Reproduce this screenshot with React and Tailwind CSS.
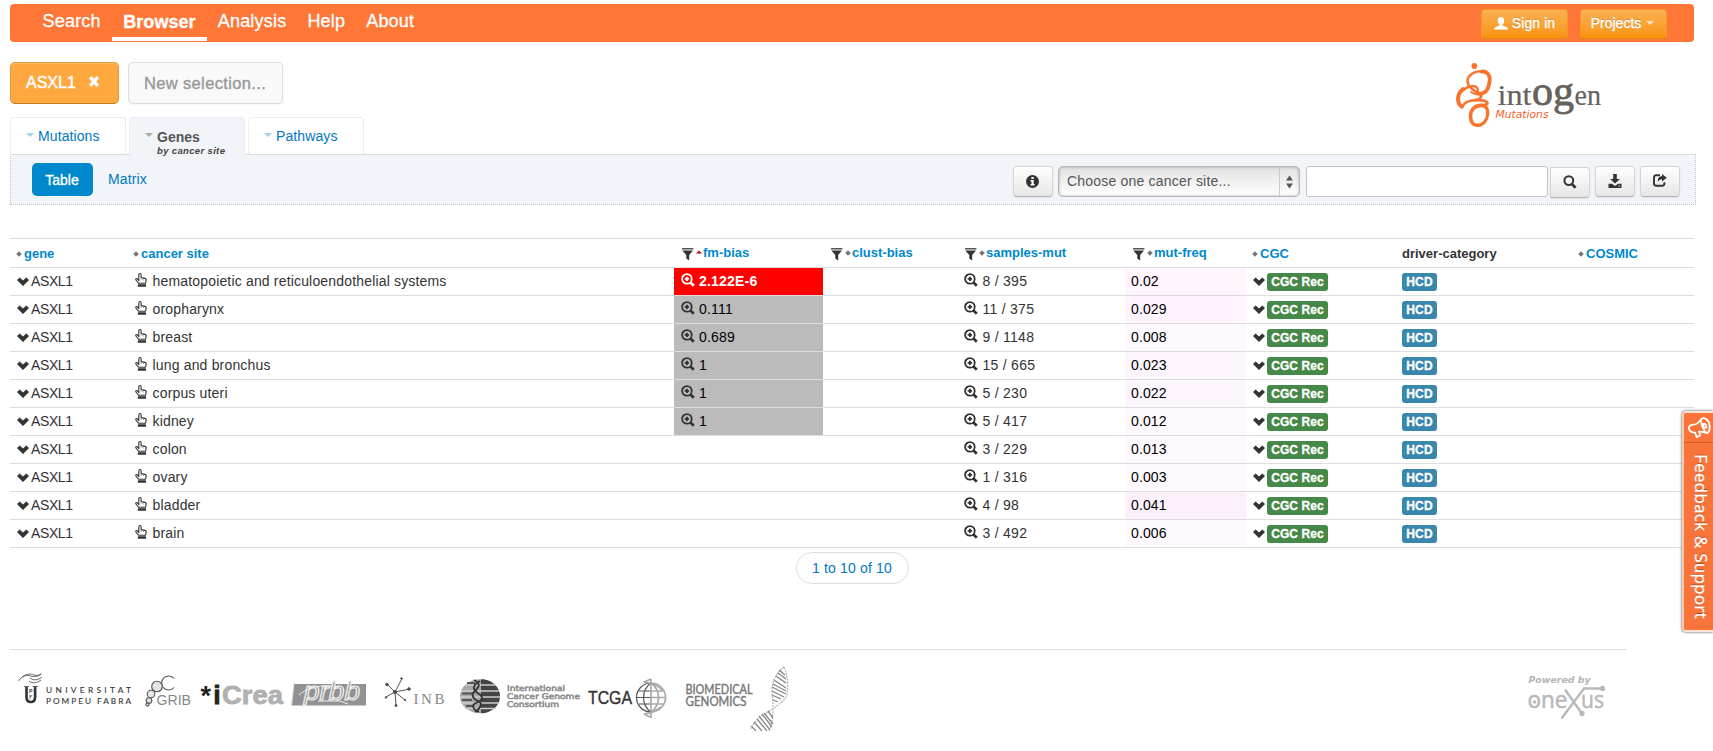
import React from "react";

const rows = [
  ["hematopoietic and reticuloendothelial systems", "2.122E-6", "8 / 395", "0.02", "bg-[#fef5ff]"],
  ["oropharynx", "0.111", "11 / 375", "0.029", "bg-[#fff3ff]"],
  ["breast", "0.689", "9 / 1148", "0.008", "bg-[#fef9ff]"],
  ["lung and bronchus", "1", "15 / 665", "0.023", "bg-[#fdf5fe]"],
  ["corpus uteri", "1", "5 / 230", "0.022", "bg-[#fdf5fe]"],
  ["kidney", "1", "5 / 417", "0.012", "bg-[#fdf7fe]"],
  ["colon", "", "3 / 229", "0.013", "bg-[#fdf7fe]"],
  ["ovary", "", "1 / 316", "0.003", "bg-[#fdf9fe]"],
  ["bladder", "", "4 / 98", "0.041", "bg-[#fcf0fd]"],
  ["brain", "", "3 / 492", "0.006", "bg-[#fdf9fe]"],
];

const Chevron = () => (
  <svg width="12" height="9" viewBox="0 0 12 9" className="shrink-0">
    <path d="M2.700 .4 6 3.500 9.300 .4 12 3.100 6 9 0 3.100Z" fill="#333" />
  </svg>
);

const Hand = () => (
  <svg width="12" height="14" viewBox="0 0 12 14" className="shrink-0">
    <path d="M3.800 8V1.700a1.100 1.100 0 0 1 2.300 0V4.600l3.900.8a1.300 1.300 0 0 1 1.200 1.500L10.600 10.200H3.500L.9 7C.4 6 1.600 5.100 2.400 5.900L3.800 7.400" fill="#fff" stroke="#333" strokeWidth="1.100" strokeLinejoin="round" />
    <path d="M6.200 5.500v1.600M8.300 5.900v1.400" stroke="#777" strokeWidth=".6" />
    <rect x="2.800" y="11.300" width="8.200" height="2.400" rx=".5" fill="#333" />
  </svg>
);

const ZoomIn = ({ color }) => (
  <svg width="14" height="14" viewBox="0 0 14 14" className="-mt-[2px] shrink-0" fill="none" stroke={color}>
    <circle cx="5.900" cy="5.900" r="4.800" strokeWidth="1.800" />
    <path d="M9.200 9.200 12.800 12.800" strokeWidth="2.700" />
    <path d="M5.900 3.700v4.400M3.700 5.900h4.400" strokeWidth="1.900" />
  </svg>
);

const Funnel = () => (
  <svg width="12" height="13" viewBox="0 0 12 13" className="shrink-0" fill="#333">
    <rect x="0" y="0" width="11.400" height="1.500" fill="#555" />
    <path d="M.3 2.400H11L7.200 7v5.600L4.300 10.600V7Z" />
  </svg>
);

const Sort = ({ asc }) =>
  asc ? (
    <svg width="6" height="6" viewBox="0 0 6 6" className="shrink-0"><path d="M0 3.400 3 .6 6 3.400Z" fill="#a11" /></svg>
  ) : (
    <svg width="6" height="6" viewBox="0 0 6 6" className="shrink-0"><path d="M3 .2 5.800 3 3 5.800 .2 3Z" fill="#777" /></svg>
  );

function Head({ label, filter, asc, plain, shift = "" }) {
  return (
    <th className="h-[29px] p-0 pl-[8px] text-left align-top">
      <div className={`flex items-center ${filter ? "pt-[4px]" : "pt-[5px]"} ${shift}`}>
        {filter && <span className="mr-[2px] mt-[2px] flex"><Funnel /></span>}
        {!plain && <span className={filter ? "mr-px" : "-ml-px mr-[2px]"}><Sort asc={asc} /></span>}
        <span className={plain ? "text-[#333]" : "text-[#0088cc]"}>{label}</span>
      </div>
    </th>
  );
}

function IconButton({ children, className = "" }) {
  return (
    <button className={`flex h-[31px] w-10 items-center justify-center rounded-[4px] border border-[#d4d4d4] border-b-[#b3b3b3] bg-linear-to-b from-white to-[#e6e6e6] shadow-[0_1px_2px_rgba(0,0,0,.08)] ${className}`}>
      {children}
    </button>
  );
}

function Tab({ label, children, active }) {
  return (
    <div className={`flex w-[116px] items-start rounded-t-[4px] border border-b-0 border-dotted pt-[8px] ${active ? "h-[39px] border-[#e3e8ec] bg-[#f1f5f9] pl-[15px]" : "h-[38px] border-[#ddd] pl-[15px]"}`}>
      <svg width="8" height="4" viewBox="0 0 8 4" className="mr-[4px] mt-[7px]">
        <path d="M0 0H8L4 4Z" fill={active ? "#aaa" : "#a3d3ec"} />
      </svg>
      {active ? (
        <div className="pt-px">
          <div className="text-[14px] font-bold leading-5 text-[#555]">{label}</div>
          <div className="-mt-[3px] whitespace-nowrap text-[9.5px] font-bold italic leading-[14px] tracking-[0.35px] text-[#444]">{children}</div>
        </div>
      ) : (
        <div className="text-[14px] leading-5 tracking-[0.1px] text-[#0077c0]">{label}</div>
      )}
    </div>
  );
}

const IntogenLogo = () => (
  <svg width="156" height="70" viewBox="1452 60 156 70">
    <circle cx="1474.300" cy="66" r="2.900" fill="#fb742f" />
    <g fill="none" stroke="#fb742f" strokeLinecap="round">
      <path d="M1481.500 71.600C1487.500 70.800 1490.500 76 1489.600 81.500 1488.600 88.500 1485.500 94 1480 93.600" strokeWidth="3.800" />
      <path d="M1481.500 71.400C1473.500 71 1468 75.500 1467.500 80.500 1467.300 85 1472.500 91.500 1480 93.500" strokeWidth="2.500" />
      <path d="M1477 93.500C1479 89 1477 85.800 1472.500 86 1466 86.500 1458.500 92.500 1457.300 99.500" strokeWidth="2.400" />
      <path d="M1463 89C1459 92 1457.600 96 1458.200 100.500 1458.600 103.500 1460 106 1462 106.500" strokeWidth="4" />
      <path d="M1462 106.800C1464.500 102.500 1469 100.600 1474 100.300 1480 100 1482.500 97 1480.500 94" strokeWidth="2.600" />
      <path d="M1471 92C1474 94 1477 95.500 1480.500 94" strokeWidth="2" />
      <path d="M1475 100.300C1482 99.500 1487 101 1487.300 103 1487.300 105 1484 105.500 1480 105.400" strokeWidth="3" />
      <path d="M1481.500 105.400C1474 105.500 1470.500 110.500 1470.500 116.500 1470.500 122 1473.500 125.500 1477.500 125.300" strokeWidth="3.600" />
      <path d="M1481.500 105.400C1486 106 1488 109.500 1487.700 114 1487.200 120.500 1483 125.500 1477.500 125.300" strokeWidth="3.200" />
    </g>
    <g fill="#66635c" stroke="#66635c" fontFamily="'Liberation Serif', serif">
      <text x="1497.500" y="105.300" fontSize="30" strokeWidth=".2" textLength="34" lengthAdjust="spacingAndGlyphs">int</text>
      <text x="1532" y="105.300" fontSize="41" strokeWidth=".8" textLength="42" lengthAdjust="spacingAndGlyphs">og</text>
      <text x="1574.500" y="105.300" fontSize="30" strokeWidth=".2" textLength="26.500" lengthAdjust="spacingAndGlyphs">en</text>
    </g>
    <text x="1495.500" y="118" fontSize="11" fontStyle="italic" fontFamily="'DejaVu Sans', sans-serif" fill="#f4622b" textLength="53" lengthAdjust="spacingAndGlyphs">Mutations</text>
  </svg>
);

const FooterLogos = () => (
  <div className="flex">
    <svg width="122" height="75" viewBox="18 660 122 75">
      <g fill="none" stroke="#555" strokeWidth=".9">
        <path d="M18.500 681c4-6 9-6 12-5s7 1 11-2M22 677c5-4 9-3 12-2s5 0 7-1M29 681c4 3 8 2 12-1M30 678c4 3 8 2 12-1" />
        <path d="M24 686.500h5M32.500 686.500h5.500" />
      </g>
      <path d="M26.500 687v10q0 5 4.300 5t4.300-5v-10" fill="none" stroke="#333" strokeWidth="2.600" />
      <g fontFamily="Lato, sans-serif" fill="#333">
        <text x="29" y="692.500" fontSize="5.500" fontWeight="700">P</text>
        <text x="29.200" y="698.500" fontSize="5" fontWeight="700">F</text>
        <text x="46" y="692.500" fontSize="8.300" stroke="#333" strokeWidth=".1" textLength="85">UNIVERSITAT</text>
        <text x="46" y="703.500" fontSize="8.300" stroke="#333" strokeWidth=".1" textLength="85">POMPEU FABRA</text>
      </g>
    </svg>
    <svg width="58" height="75" viewBox="140 660 58 75">
      <g fill="#e4e4e4" stroke="#555" strokeWidth="1.100">
        <path d="M174 678.500a7 7 0 1 0 0 9" fill="none" />
        <circle cx="157" cy="686.500" r="5.300" /><circle cx="151" cy="694" r="3.800" />
        <circle cx="149" cy="700.500" r="2.800" /><circle cx="147.500" cy="704.500" r="1.600" />
      </g>
      <text x="156.500" y="705.300" fontSize="14.500" fontFamily="'Liberation Sans', sans-serif" fill="#888" textLength="34.500" lengthAdjust="spacingAndGlyphs">GRIB</text>
    </svg>
    <svg width="90" height="75" viewBox="198 660 90 75">
      <g fontFamily="'Liberation Sans', sans-serif" fontWeight="700" fontSize="25">
        <text x="200.500" y="705" fontSize="27" fill="#222">*</text>
        <text x="213.500" y="703.500" fill="#222" stroke="#222">i</text>
        <text x="222" y="703.500" fill="#b0b0b0" stroke="#b0b0b0" strokeWidth=".8" textLength="61" lengthAdjust="spacingAndGlyphs">Crea</text>
      </g>
    </svg>
    <svg width="92" height="75" viewBox="288 660 92 75">
      <path d="M294 684H366V705.500H291.500Z" fill="#929292" />
      <path d="M294 683 291.500 706" stroke="#ddd" />
      <text x="304" y="700" fontSize="25" fontStyle="italic" fontFamily="'Liberation Sans', sans-serif" fill="#929292" stroke="#f5f5f5" strokeWidth="1.100" textLength="56" lengthAdjust="spacingAndGlyphs">prbb</text>
      <path d="M299 695c7-6 16-10 33-9M318 701h22l8 3" fill="none" stroke="#eee" />
    </svg>
    <svg width="76" height="75" viewBox="380 660 76 75">
      <g stroke="#555" strokeWidth="1" fill="#444">
        <path d="M395 692 387 684M395 692 402 678.500M395 692 410 689M395 692 386 697M395 692 396 706M395 692 405 700" />
        <circle cx="395" cy="692" r="1.600" /><circle cx="387" cy="684.500" r="1.300" /><circle cx="401.500" cy="678.500" r=".8" />
        <circle cx="409" cy="689" r="1.300" /><circle cx="386" cy="697.500" r=".8" /><circle cx="396" cy="705.500" r="1" /><circle cx="405" cy="700" r=".8" />
      </g>
      <text x="413.500" y="704.300" fontSize="15" fontFamily="'Liberation Serif', serif" fill="#888" textLength="31">INB</text>
    </svg>
    <svg width="128" height="75" viewBox="456 660 128 75">
      <ellipse cx="480" cy="696.300" rx="20" ry="17" fill="#a8a8a8" />
      <path d="M481 679.300a19 17 0 0 1 0 34Z" fill="#444" />
      <path d="M461 691h38.500M460 697h40M461.500 703h38M465 708.500h31M465 685h31" stroke="#ccc" strokeWidth="1.500" />
      <path d="M467 683h8M462 693.500h10M462 700h10M466 706h8" stroke="#555" strokeWidth="2" />
      <path d="M474 680c9 4 3 9 0 12s-1 7 4 9 3 7-3 11M480 681c-9 5-7 9-1 13s2 7-3 9-3 7 3 9" fill="none" stroke="#333" strokeWidth="1.800" />
      <g fontFamily="'DejaVu Sans', sans-serif" fontSize="7.800" fill="#888" stroke="#888" strokeWidth=".5">
        <text x="507" y="691.300" textLength="58" lengthAdjust="spacingAndGlyphs">International</text>
        <text x="507" y="699.300" textLength="73" lengthAdjust="spacingAndGlyphs">Cancer Genome</text>
        <text x="507" y="707.300" textLength="52" lengthAdjust="spacingAndGlyphs">Consortium</text>
      </g>
    </svg>
    <svg width="98" height="75" viewBox="584 660 98 75">
      <text x="588" y="704" fontSize="18.500" fontFamily="'Liberation Sans', sans-serif" fill="#333" stroke="#333" strokeWidth=".4" textLength="44" lengthAdjust="spacingAndGlyphs">TCGA</text>
      <g fill="none">
        <path d="M651 683a14.500 14.500 0 0 0 0 29M651 683c-10 7-10 22 0 29M637 697.500h14M639 691h12M639 704h12" stroke="#555" strokeWidth="1.200" />
        <path d="M651 683a14.500 14.500 0 0 1 0 29M651 679v39M651 683c10 7 10 22 0 29M651 697.500h14M651 691h12M651 704h12M644 682l7-3M644 714l7 3.500M644 682c9 1 14 4 18 8M644 714c9-1 13-4 17-7" stroke="#aaa" strokeWidth="1.700" />
      </g>
    </svg>
    <svg width="116" height="75" viewBox="682 660 116 75">
      <g fontFamily="Lato, sans-serif" fontSize="12.500" fill="#777" stroke="#777" strokeWidth=".4">
        <text x="685.500" y="694" textLength="67" lengthAdjust="spacingAndGlyphs">BIOMEDICAL</text>
        <text x="685.500" y="706.300" textLength="61" lengthAdjust="spacingAndGlyphs">GENOMICS</text>
      </g>
      <g fill="none" stroke="#aaa" strokeWidth="1.100">
        <path d="M784 667c-13 10-13 22-11 36 0 10 0 19-4 28M784 667c4 9 4 19 3 27-1 6-8 10-14 15-9 5-18 10-22 20" strokeDasharray="2 1" />
        <path d="M779 670l6 5M778 673l8 6M776 676l10 7M774 680l12 8M773 684l13 7M772 687l14 7M772 691l12 6M772 695l9 4M773 700l5 2M768 711l5 7M764 713l9 11M762 714l10 13M759 716l11 14M757 719l10 12M754 722l8 9M751 726l5 5" stroke="#888" strokeWidth="1.300" />
      </g>
    </svg>
  </div>
);

const Onexus = () => (
  <svg width="80" height="75" viewBox="1526 660 80 75">
    <text x="1528.500" y="682.500" fontSize="9.500" fontWeight="700" fontStyle="italic" fontFamily="'DejaVu Sans', sans-serif" fill="#b5b5b5" textLength="62" lengthAdjust="spacingAndGlyphs">Powered by</text>
    <g fontFamily="'Open Sans', sans-serif" fontSize="24" fill="#b8b8b8" stroke="#b8b8b8" strokeWidth=".5">
      <text x="1527.500" y="708" textLength="40" lengthAdjust="spacingAndGlyphs">one</text>
      <text x="1581" y="708" textLength="23" lengthAdjust="spacingAndGlyphs">us</text>
    </g>
    <g stroke="#b8b8b8" fill="none" strokeWidth="2.300">
      <path d="M1561.500 718.500 1584 688.500H1602M1565 689.500 1581.500 713" />
      <circle cx="1602.500" cy="688.500" r="1.500" fill="#b8b8b8" /><circle cx="1582" cy="713.500" r="1.500" fill="#b8b8b8" />
      <circle cx="1534.500" cy="702" r="1" strokeWidth="1.500" />
    </g>
  </svg>
);

export default function App() {
  const menu = ["Search", "Browser", "Analysis", "Help", "About"];
  return (
    <div className="relative h-[751px] w-[1713px] overflow-hidden bg-white pl-[10px] pt-1 font-['Liberation_Sans',Arial,sans-serif] text-[14px] leading-5 text-[#333]">
      <nav className="flex h-[38px] w-[1684px] items-start rounded-[4px] bg-[#ff7736] pl-[22px] text-[18px] text-white">
        {menu.map((m) =>
          m === "Browser" ? (
            <a key={m} className="ml-px h-[37px] w-[95px] border-b-4 border-white pl-[11px] pt-[8px] font-bold tracking-[0.05px] [-webkit-text-stroke:.3px_white]">{m}</a>
          ) : (
            <a key={m} className="px-[10.5px] pt-[7px] tracking-[0.2px] [-webkit-text-stroke:.3px_white] [text-shadow:0_-1px_0_rgba(0,0,0,.12)]">{m}</a>
          )
        )}
        <div className="ml-auto mr-[27px] mt-[5px] flex gap-3 text-[14px]">
          <button className="flex h-[30px] w-[87px] items-center justify-center gap-[4px] rounded-[4px] border border-[#f5992b] border-b-[#d98a1c] bg-linear-to-b from-[#fbb04f] to-[#f89406] pb-[2px] [text-shadow:0_-1px_0_rgba(0,0,0,.25)]">
            <svg width="14" height="13" viewBox="0 0 14 13"><path d="M7 0c2.300 0 3.200 1.500 3.200 3.500S9.300 7 8.600 7.500v1L13 10.500q1 .6 1 2H0q0-1.400 1-2l4.400-2v-1C4.700 7 3.800 5.500 3.800 3.500S4.700 0 7 0Z" fill="#fff" /></svg>
            <span className="tracking-[0.1px] [-webkit-text-stroke:.3px_white]">Sign in</span>
          </button>
          <button className="flex h-[30px] w-[87px] items-center justify-center gap-[5px] rounded-[4px] border border-[#f5992b] border-b-[#d98a1c] bg-linear-to-b from-[#fbb04f] to-[#f89406] pb-[2px] pr-[2px] [text-shadow:0_-1px_0_rgba(0,0,0,.25)]">
            <span className="[-webkit-text-stroke:.3px_white]">Projects</span>
            <svg width="8" height="4" viewBox="0 0 8 4"><path d="M0 0H8L4 4Z" fill="#fde3bd" /></svg>
          </button>
        </div>
      </nav>

      <header className="flex h-[75px] items-start">
        <div className="flex gap-[9px] pt-[20px]">
          <button className="flex h-[42px] w-[109px] items-center rounded-[5px] border border-[#dd963c] border-b-[#c27c25] bg-[#ffa83f] pl-[15px] text-[16px] text-white shadow-[inset_0_1px_0_#ffbc63] [-webkit-text-stroke:.4px_white]">
            ASXL1
            <svg width="12" height="11" viewBox="0 0 12 11" className="-mt-[3px] ml-[12px]"><path d="M2.200 1.200 9.800 9.800M9.800 1.200 2.200 9.800" stroke="#fff" strokeWidth="3.400" /></svg>
          </button>
          <button className="h-[42px] w-[155px] rounded-[5px] border border-[#ddd] bg-[#f9f9f9] pl-[15px] text-left text-[16.5px] tracking-[0.35px] text-[#999] shadow-[0_1px_2px_rgba(0,0,0,.05)] [-webkit-text-stroke:.4px_#999]">New selection...</button>
        </div>
        <div className="ml-auto mr-[105px] pt-[18px]"><IntogenLogo /></div>
      </header>

      <div className="flex h-[38px] gap-[3px] pr-4">
        <Tab label="Mutations" />
        <Tab label="Genes" active>by cancer site</Tab>
        <Tab label="Pathways" />
      </div>
      <section className="-mt-px flex h-[51px] w-[1686px] border border-dotted border-[#bfbfbf] bg-[#f1f5f9] [background-clip:padding-box] [border-top:1px_solid_#ddd]">
        <button className="ml-[21px] mt-[8px] h-[33px] w-[61px] rounded-[5px] bg-[#0088cc] pr-px text-white [-webkit-text-stroke:.3px_white]">Table</button>
        <a className="ml-[15px] mt-[14px] tracking-[0.15px] text-[#0077c0]">Matrix</a>
        <div className="ml-auto flex pr-[15px] pt-[11px]">
          <IconButton>
            <svg width="13" height="13" viewBox="0 0 13 13" className="-ml-px -mt-px"><circle cx="6.500" cy="6.500" r="6.500" fill="#333" /><path d="M5.400 2h2.300v2H5.400zM4.600 5h3.100v4h.9v1.600H4.600V9h.9V6.600h-.9z" fill="#fff" /></svg>
          </IconButton>
          <div className="ml-[5px] flex h-[31px] w-[242px] items-center rounded-[5px] border border-[#b5b5b5] bg-linear-to-b from-[#e2e2e2] to-white pl-[8px] text-[#555] shadow-[inset_0_0_3px_rgba(0,0,0,.3)]">
            <span className="-mt-px tracking-[0.2px]">Choose one cancer site...</span>
            <span className="ml-auto flex h-full w-[20px] items-center justify-center border-l border-[#ccc]">
              <svg width="7" height="14" viewBox="0 0 7 14"><path d="M0 5.500 3.500 .5 7 5.500ZM0 8.500H7L3.500 13.500Z" fill="#555" /></svg>
            </span>
          </div>
          <input className="ml-[6px] h-[31px] w-[242px] rounded-[3px] border border-[#c4c4c4] bg-white" />
          <IconButton className="ml-[2px] mt-px rounded-l-none">
            <svg width="14" height="14" viewBox="0 0 14 14" className="-mt-px" fill="none" stroke="#333"><circle cx="5.800" cy="5.600" r="4.400" strokeWidth="2" /><path d="M8.900 9 12.600 12.700" strokeWidth="2.700" /></svg>
          </IconButton>
          <IconButton className="ml-[5px]">
            <svg width="14" height="14" viewBox="0 0 14 14" className="-mt-[2px]" fill="#333"><path d="M5.200 0h3.600v5H12L7 9.600 2 5h3.200z" /><path d="M.5 9.800h3.500L7 12l3-2.200h3.500V14H.5z" /><path d="M10.500 12h1.500" stroke="#eee" /></svg>
          </IconButton>
          <IconButton className="ml-[5px]">
            <svg width="14" height="13" viewBox="0 0 14 13" className="-ml-px -mt-[2px]"><path d="M7 1.300H3.200Q1 1.300 1 3.500v6Q1 11.700 3.200 11.700h6Q11.400 11.700 11.400 9.500V8.300" fill="none" stroke="#333" strokeWidth="1.900" /><path d="M9 0 13.800 3.700 9 7.400V5.200C7 5.200 5.800 6 5 8 4.500 4.500 6 2.300 9 2.300Z" fill="#333" /></svg>
          </IconButton>
        </div>
      </section>

      <table className="mt-[33px] w-[1684px] table-fixed border-collapse">
        <colgroup>
          <col className="w-[117px]" /><col className="w-[547px]" /><col className="w-[149px]" />
          <col className="w-[135px]" /><col className="w-[167px]" /><col className="w-[121px]" />
          <col className="w-[148px]" /><col className="w-[177px]" /><col className="w-[123px]" />
        </colgroup>
        <thead className="text-[13px]">
          <tr className="border-y border-[#ddd]">
            <Head label="gene" shift="-ml-px" /><Head label="cancer site" shift="-ml-px" /><Head label="fm-bias" filter asc /><Head label="clust-bias" filter />
            <Head label="samples-mut" filter shift="-ml-px" /><Head label="mut-freq" filter /><Head label="CGC" shift="-ml-px" /><Head label="driver-category" plain /><Head label="COSMIC" />
          </tr>
        </thead>
        <tbody>
          {rows.map(([site, fm, samples, freq, tint], i) => (
            <tr key={site} className="h-[28px] border-b border-[#ddd]">
              <td className="p-0 pb-[2px] pl-[7px]"><div className="flex items-center gap-[2px]"><span className="mt-px"><Chevron /></span><span className="tracking-[-0.4px]">ASXL1</span></div></td>
              <td className="p-0 pb-[2px] pl-[8px]"><div className="flex items-center gap-[5.5px]"><span className="-mt-[2px]"><Hand /></span><span className="tracking-[0.17px]">{site}</span></div></td>
              <td className={`p-0 pb-[2px] pl-[7px] ${i === 0 ? "bg-[#ff0000] font-bold text-white" : fm ? "bg-[#bbb] text-black" : ""}`}>
                {fm && <div className="flex items-center gap-[4px]"><ZoomIn color={i === 0 ? "#fff" : "#333"} /><span className="tracking-[0.2px]">{fm}</span></div>}
              </td>
              <td />
              <td className="p-0 pb-[2px] pl-[6px]"><div className="flex items-center gap-[4.5px]"><ZoomIn color="#333" /><span className="tracking-[0.27px]">{samples}</span></div></td>
              <td className={`p-0 pb-[2px] pl-[6px] tracking-[0.1px] text-black ${tint}`}>{freq}</td>
              <td className="p-0 pl-[7px]"><div className="flex items-center gap-[2px]"><Chevron /><span className="mt-px flex h-[18px] w-[61px] items-center justify-center rounded-[3px] bg-[#468847] text-[12px] font-bold tracking-[0.1px] text-white [-webkit-text-stroke:.3px_white]">CGC Rec</span></div></td>
              <td className="p-0 pl-[8px]"><span className="mt-px flex h-[18px] w-[35px] items-center justify-center rounded-[3px] bg-[#3a87ad] text-[12px] font-bold tracking-[0.1px] text-white [-webkit-text-stroke:.3px_white]">HCD</span></td>
              <td />
            </tr>
          ))}
        </tbody>
      </table>

      <div className="mt-1 flex w-[1684px] justify-center">
        <a className="flex h-[32px] w-[113px] items-center justify-center rounded-full border border-[#ddd] tracking-[0.15px] text-[#0077c0]">1 to 10 of 10</a>
      </div>

      <footer className="mt-[65px] flex w-[1617px] justify-between border-t border-[#e0e0e0] pl-[8px] pr-[21px] pt-[10px]">
        <FooterLogos />
        <Onexus />
      </footer>

      <aside className="absolute right-0 top-[411px] flex h-[221px] w-[31px] flex-col rounded-l-[4px] border-y-2 border-l-2 border-[#fbe3d6] border-l-[#fcc9ad] bg-[#f9743a] shadow-[0_0_3px_rgba(0,0,0,.7)]">
        <div className="flex h-[30px] shrink-0 items-center justify-center border-b border-[#d55b25]">
          <svg width="24" height="22" viewBox="0 0 25 22" fill="none" stroke="#fff" strokeWidth="1.800" strokeLinejoin="round">
            <path d="M2 11.500C1.500 8.500 4.500 7.500 7 7.500 10 7.500 12.500 5 14.500 2 17-1 23 2 23.500 8 24 13 23 15.500 21 16.500 18 15 15.500 14.500 12.500 14.800L14 18.500 10 20.500 8.500 15.800C5 16 2.500 14.500 2 11.500Z" />
            <path d="M14.500 2C14 7 17 13 21 16.500M16.500 6.500Q20 6 20.500 10.500L18 11Z" />
          </svg>
        </div>
        <div className="ml-[4px] mt-[11px] whitespace-nowrap font-['Open_Sans',sans-serif] text-[17px] leading-[24px] tracking-[0.25px] text-white [-webkit-text-stroke:.3px_white] [text-shadow:-1px_0_0_rgba(120,40,0,.6)] [writing-mode:vertical-rl]">
          Feedback &amp; Support
        </div>
      </aside>
    </div>
  );
}
